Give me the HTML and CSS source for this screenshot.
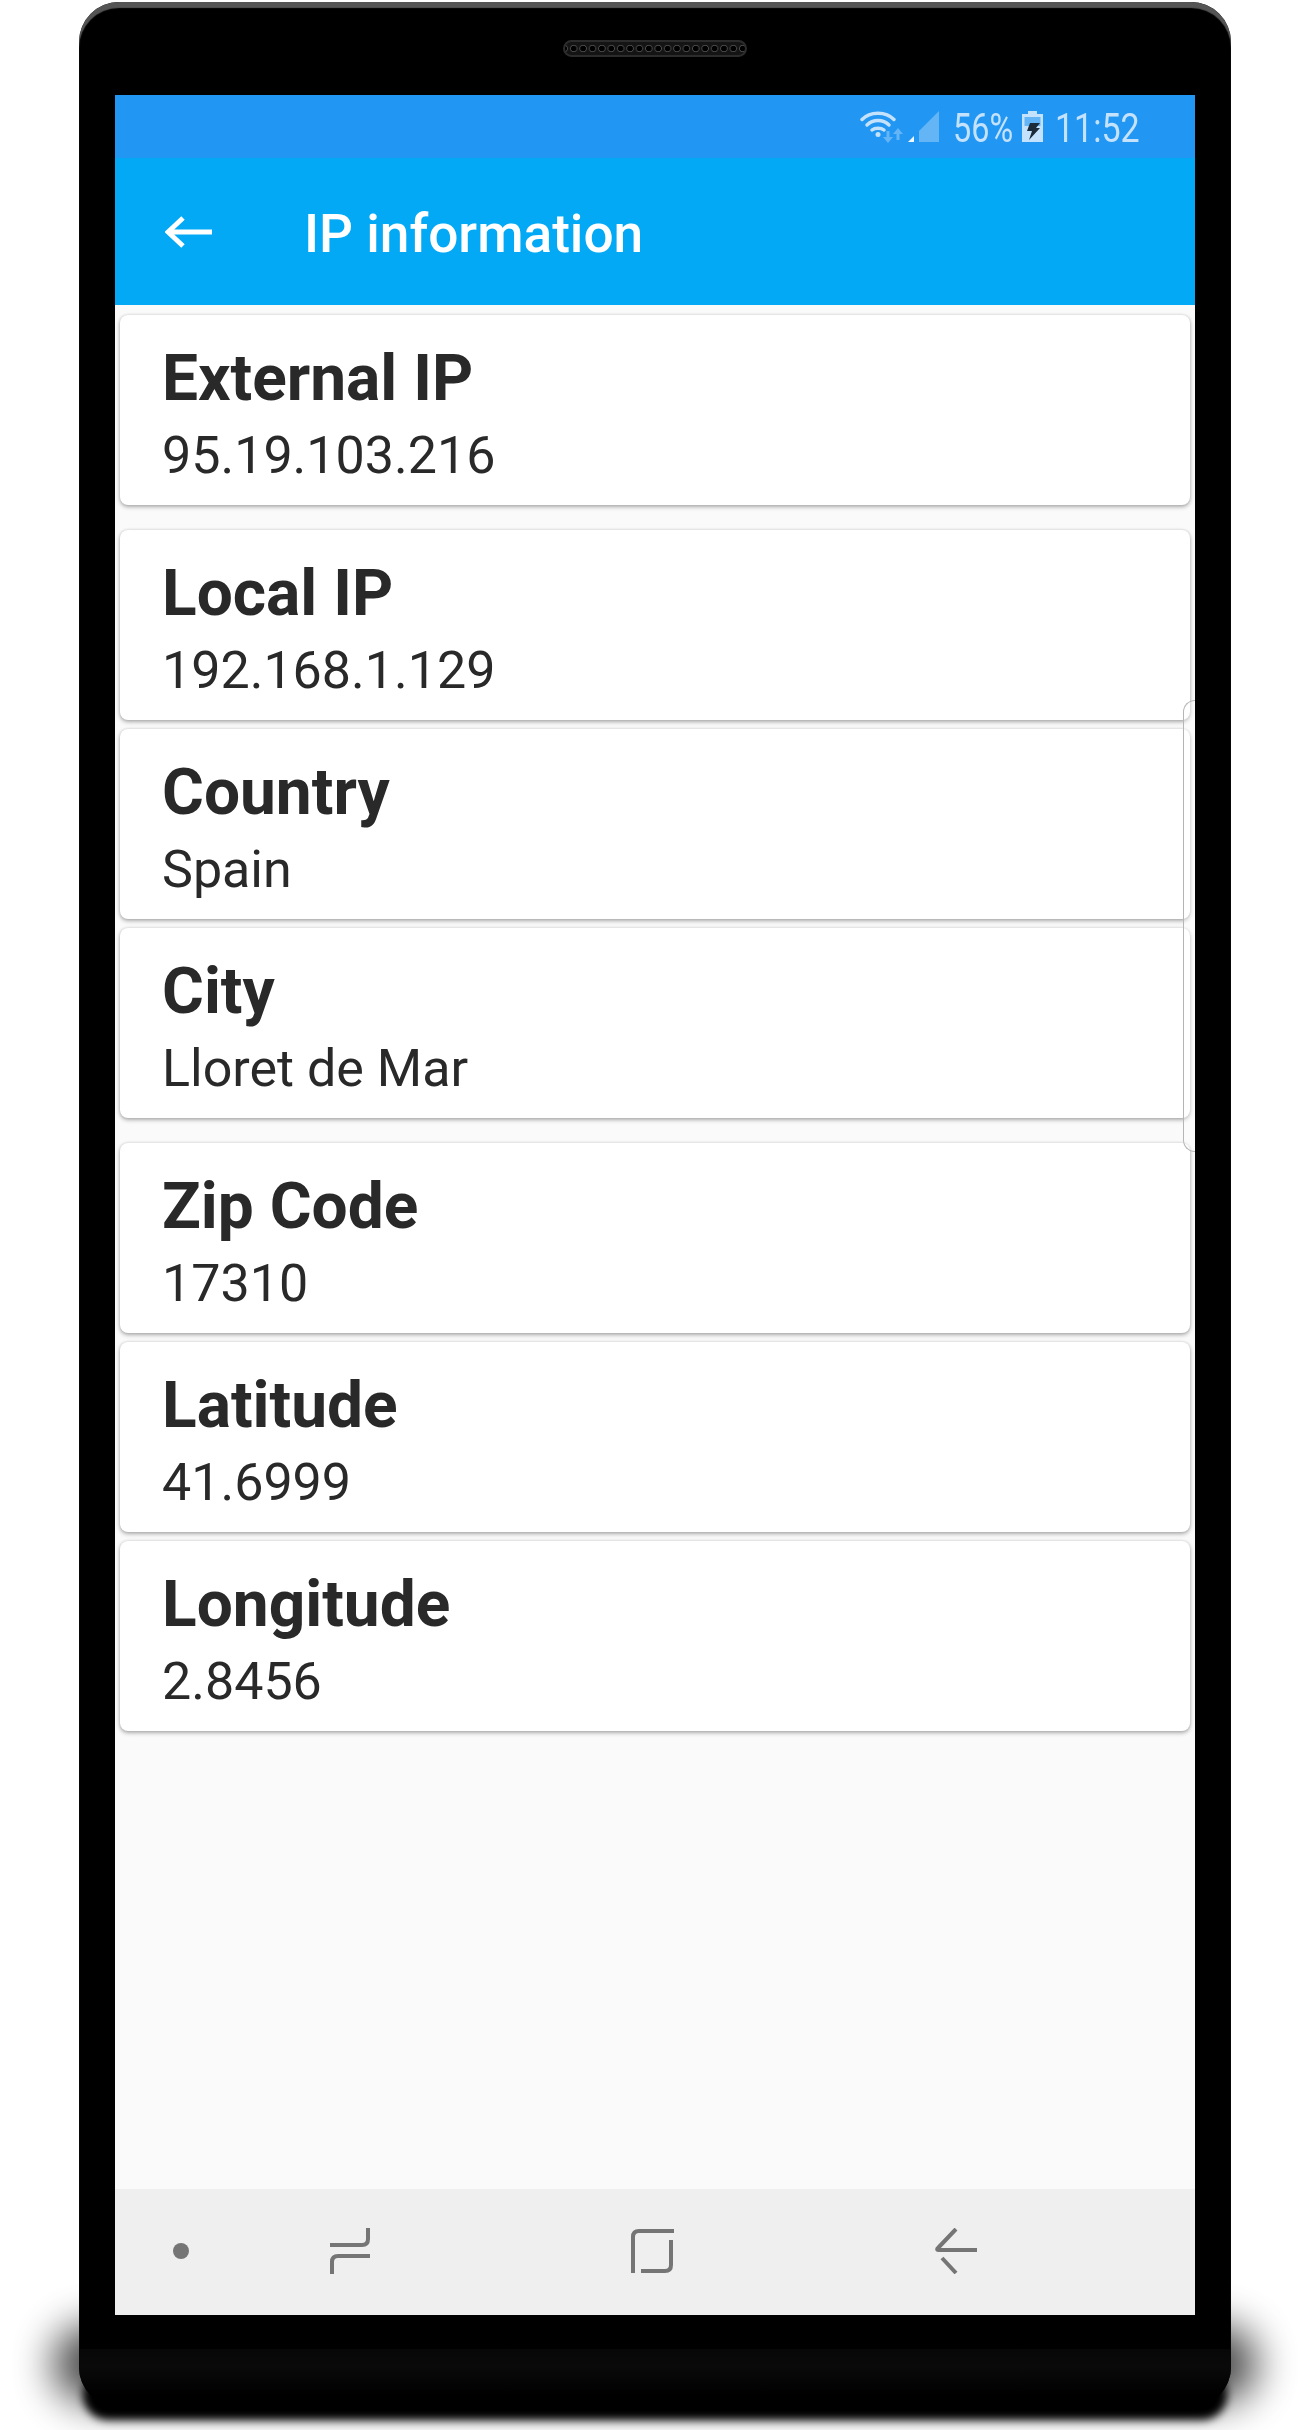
FILE: index.html
```html
<!DOCTYPE html>
<html lang="en">
<head>
<meta charset="utf-8">
<title>IP information</title>
<link rel="stylesheet" href="styles.css">
</head>
<body>
<div class="phone">
  <div class="bezel"><div class="speaker"></div></div>
  <main class="screen">
    <div class="status">
      <svg class="wifi" width="42" height="32" viewBox="0 0 42 32">
        <path class="wifi-arc" d="M2 8.500C10 0 26 0 34 8.500M7 14C13 8 23 8 29 14M12 19C15 16.500 21 16.500 24 19"/>
        <circle class="wifi-dot" cx="18" cy="23.500" r="2.500"/>
        <path class="wifi-dim" d="M26.500 20h3v6h3.500l-5 6-5-6h3.500zM38 17l5 6h-3.500v6h-3v-6H33z"/>
      </svg>
      <svg class="signal" width="31" height="31" viewBox="0 0 31 31">
        <path class="sig-on" d="M0 31L6 25V31z"/>
        <path class="sig-off" d="M11 20L31 0V31H11z"/>
      </svg>
      <span class="pct">56%</span>
      <svg class="battery" width="21" height="31" viewBox="0 0 21 31">
        <path class="bat-body" d="M6 0h9v3h6v28H0V3h6z"/>
        <rect class="bat-empty" x="2.500" y="6" width="16" height="9"/>
        <path class="bat-bolt" d="M8 12h10l-4 5h4L7 29l3-9H5z"/>
      </svg>
      <span class="time">11:52</span>
    </div>
    <header class="appbar">
      <svg class="back" width="48" height="32" viewBox="0 0 48 32">
        <path d="M47 16H3M18 2L3 16l15 14"/>
      </svg>
      <h1 class="apptitle">IP information</h1>
    </header>
    <div class="list">
      <section class="card"><h2 class="label">External IP</h2><p class="value">95.19.103.216</p></section>
      <section class="card card-gap"><h2 class="label">Local IP</h2><p class="value">192.168.1.129</p></section>
      <section class="card"><h2 class="label">Country</h2><p class="value">Spain</p></section>
      <section class="card"><h2 class="label">City</h2><p class="value">Lloret de Mar</p></section>
      <section class="card card-gap"><h2 class="label">Zip Code</h2><p class="value">17310</p></section>
      <section class="card"><h2 class="label">Latitude</h2><p class="value">41.6999</p></section>
      <section class="card"><h2 class="label">Longitude</h2><p class="value">2.8456</p></section>
    </div>
    <div class="edge"></div>
    <nav class="navbar">
      <span class="dot"></span>
      <svg class="nav-recent" width="42" height="46" viewBox="0 0 42 46">
        <path d="M39 0V11Q39 17 33 17H1M41 28H9Q3 28 3 34V46"/>
      </svg>
      <svg class="nav-home" width="44" height="46" viewBox="0 0 44 46">
        <path d="M3 45V9Q3 3 9 3H44M41 12V37Q41 43 35 43H11"/>
      </svg>
      <svg class="nav-back" width="44" height="46" viewBox="0 0 44 46">
        <path d="M22 1L4 20Q2 22 5 22H43M8 30L22 45"/>
      </svg>
    </nav>
  </main>
  <div class="neck"></div>
  <div class="chin"></div>
</div>
</body>
</html>
```
FILE: styles.css
```css
* {
  box-sizing: border-box;
}

html {
  background: #fff;
}

body {
  margin: 0;
  height: 2430px;
  overflow: hidden;
  padding: 2px 0 0 79px;
  font-family: Roboto, "Liberation Sans", sans-serif;
}

.phone {
  position: relative;
  width: 1152px;
  height: 2405px;
  background: #000;
  border-radius: 40px;
  box-shadow: inset 0 6px 1px #555;
  display: flex;
  flex-direction: column;
}

.phone::before {
  content: "";
  position: absolute;
  z-index: -1;
  left: 4px;
  right: 4px;
  bottom: -13px;
  height: 50px;
  background: #000;
  border-radius: 30px;
  filter: blur(4px);
}

.phone::after {
  content: "";
  position: absolute;
  z-index: -1;
  left: -26px;
  right: -26px;
  bottom: 4px;
  height: 78px;
  background: #000;
  border-radius: 44px;
  opacity: .72;
  filter: blur(20px);
}

.bezel {
  height: 93px;
  flex: none;
  display: flex;
  justify-content: center;
  padding-top: 38px;
}

.speaker {
  width: 184px;
  height: 17px;
  border-radius: 9px;
  border: 2px solid #2c2c2c;
  background-color: #141414;
  background-image: radial-gradient(circle at center, #000 2.500px, #555 3.200px, #141414 4px);
  background-size: 9.400px 100%;
  background-position: 4px 0;
}

.screen {
  position: relative;
  width: 1080px;
  height: 2220px;
  flex: none;
  margin-left: 36px;
  background: #fafafa;
  display: flex;
  flex-direction: column;
}

.status {
  height: 63px;
  flex: none;
  background: #2196f3;
  display: flex;
  align-items: flex-start;
  padding: 16px 0 0 745px;
  color: #c4e2fc;
  font-size: 40px;
  font-weight: 400;
  line-height: 47px;
  white-space: nowrap;
}

.wifi {
  flex: none;
  margin-right: 6px;
  overflow: visible;
}

.wifi-arc {
  fill: none;
  stroke: #c4e2fc;
  stroke-width: 3.500px;
  stroke-linecap: round;
}

.wifi-dot {
  fill: #c4e2fc;
}

.wifi-dim {
  fill: #64b5f6;
}

.signal {
  flex: none;
  margin-right: 14px;
}

.sig-on {
  fill: #f0f8ff;
}

.sig-off {
  fill: #64b5f6;
}

.pct {
  width: 60px;
  margin: -6px 9px 0 0;
  transform: scaleX(.81);
  transform-origin: left center;
}

.battery {
  flex: none;
  margin-right: 12px;
}

.bat-body {
  fill: #c4e2fc;
}

.bat-empty {
  fill: #64b5f6;
}

.bat-bolt {
  fill: #1c2b3a;
}

.time {
  width: 84px;
  margin-top: -6px;
  transform: scaleX(.85);
  transform-origin: left center;
}

.appbar {
  height: 147px;
  flex: none;
  background: #03a9f4;
  display: flex;
  align-items: center;
  padding-left: 50px;
  color: #fff;
}

.back {
  flex: none;
  margin-right: 91px;
}

.back path {
  fill: none;
  stroke: #fff;
  stroke-width: 5px;
}

.apptitle {
  margin: 4px 0 0;
  font-size: 53.200px;
  font-weight: 500;
  line-height: 64px;
}

.list {
  flex: 1;
  display: flex;
  flex-direction: column;
  gap: 9px;
  padding: 10px 5px 0;
}

.card {
  height: 190px;
  padding: 24px 0 0 42px;
  background: #fff;
  border-radius: 8px;
  box-shadow: 0 2px 4px rgba(0, 0, 0, .3), 0 0 3px rgba(0, 0, 0, .14);
  color: #292929;
}

.card-gap {
  margin-top: 16px;
}

.label {
  margin: 0;
  font-size: 64px;
  font-weight: 700;
  line-height: 80px;
}

.value {
  margin: 0;
  font-size: 52px;
  font-weight: 400;
  line-height: 74px;
}

.edge {
  position: absolute;
  right: 0;
  top: 605px;
  width: 12px;
  height: 452px;
  border: 1px solid #b5b5b5;
  border-right: 0;
  border-radius: 14px 0 0 14px;
  background: rgba(255, 255, 255, .3);
}

.navbar {
  position: relative;
  height: 126px;
  flex: none;
  background: #efefef;
}

.navbar svg {
  position: absolute;
  top: 39px;
}

.navbar path {
  fill: none;
  stroke: #757575;
  stroke-width: 4px;
}

.dot {
  position: absolute;
  left: 58px;
  top: 54px;
  width: 16px;
  height: 16px;
  border-radius: 50%;
  background: #757575;
}

.nav-recent {
  left: 214px;
}

.nav-home {
  left: 515px;
}

.nav-back {
  left: 819px;
}

.neck {
  height: 34px;
  flex: none;
}

.chin {
  height: 58px;
  flex: none;
  border-radius: 0 0 40px 40px;
  background: linear-gradient(#070707, #0a0a0a 30%, #000 80%);
}
```
